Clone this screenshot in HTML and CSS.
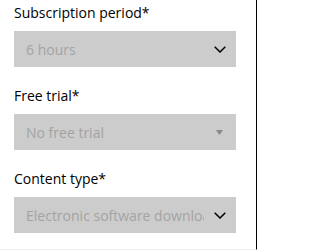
FILE: index.html
```html
<!DOCTYPE html>
<html lang="en">
<head>
<meta charset="utf-8">
<link rel="stylesheet" href="styles.css">
</head>
<body>
<div class="panel">
  <div class="field">
    <div class="label">Subscription period*</div>
    <div class="select">
      <span class="value">6 hours</span>
      <svg class="chevron" width="12" height="7" viewBox="0 0 12 7"><path d="M0.7 0.7 L6 6 L11.3 0.7" fill="none" stroke="#000" stroke-width="1.5"/></svg>
    </div>
  </div>
  <div class="field">
    <div class="label">Free trial*</div>
    <div class="select">
      <span class="value">No free trial</span>
      <svg class="tri" width="7" height="5" viewBox="0 0 7 5"><path d="M0 0 H7 L3.5 5 Z" fill="#8a8a8a"/></svg>
    </div>
  </div>
  <div class="field">
    <div class="label">Content type*</div>
    <div class="select">
      <span class="value">Electronic software download</span>
      <svg class="chevron" width="12" height="7" viewBox="0 0 12 7"><path d="M0.7 0.7 L6 6 L11.3 0.7" fill="none" stroke="#000" stroke-width="1.5"/></svg>
    </div>
  </div>
</div>
</body>
</html>
```

FILE: styles.css
```css
html, body {
  margin: 0;
  padding: 0;
  background: #fff;
}
.panel {
  box-sizing: border-box;
  width: 257px;
  height: 250px;
  padding: 3px 20px 0 14px;
  border-right: 1px solid #000;
  border-bottom: 1px solid #f0f0f0;
  display: flex;
  flex-direction: column;
  gap: 19px;
  font-family: "Open Sans", "Noto Sans", sans-serif;
}
.field {
  display: flex;
  flex-direction: column;
  gap: 8px;
}
.label {
  font-size: 14px;
  line-height: 20px;
  color: #000;
}
.select {
  height: 36px;
  background: #cccccc;
  display: flex;
  align-items: center;
  padding: 0 10px 0 12px;
}
.value {
  flex: 1;
  min-width: 0;
  white-space: nowrap;
  overflow: hidden;
  font-size: 14px;
  color: #a3a3a3;
}
.chevron {
  flex: none;
  margin-left: 10px;
}
.tri {
  flex: none;
  margin-left: 10px;
  margin-right: 3px;
}
```
